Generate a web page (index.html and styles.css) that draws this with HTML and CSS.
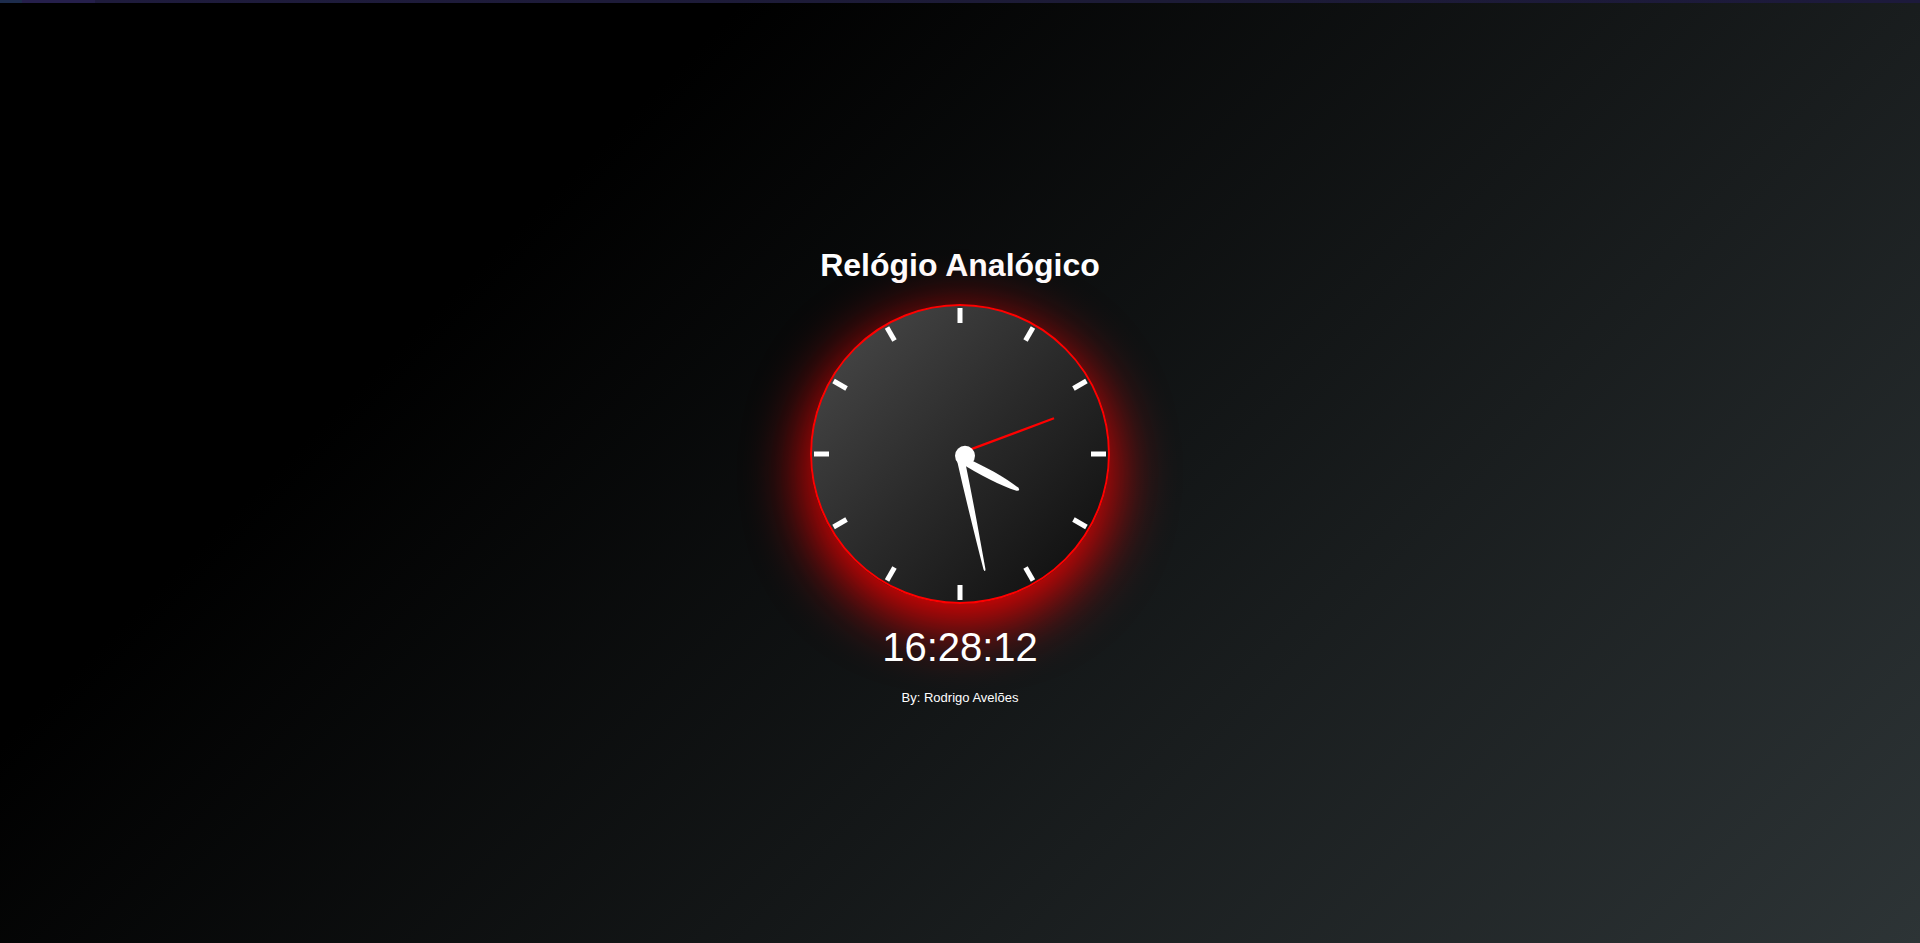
FILE: index.html
```html
<!DOCTYPE html>
<html lang="pt-BR">
<head>
<meta charset="utf-8">
<title>Relógio Analógico</title>
<link rel="stylesheet" href="styles.css">
</head>
<body>
<div class="topbar"></div>
<main class="page">
  <h1 class="title">Relógio Analógico</h1>
  <div class="clock">
    <svg class="face" width="296" height="296" viewBox="-148 -148 296 296">
      <g class="ticks" fill="#fff">
        <rect x="-2.5" y="-146" width="5" height="15" transform="rotate(0)"/>
        <rect x="-2.5" y="-146" width="5" height="15" transform="rotate(30)"/>
        <rect x="-2.5" y="-146" width="5" height="15" transform="rotate(60)"/>
        <rect x="-2.5" y="-146" width="5" height="15" transform="rotate(90)"/>
        <rect x="-2.5" y="-146" width="5" height="15" transform="rotate(120)"/>
        <rect x="-2.5" y="-146" width="5" height="15" transform="rotate(150)"/>
        <rect x="-2.5" y="-146" width="5" height="15" transform="rotate(180)"/>
        <rect x="-2.5" y="-146" width="5" height="15" transform="rotate(210)"/>
        <rect x="-2.5" y="-146" width="5" height="15" transform="rotate(240)"/>
        <rect x="-2.5" y="-146" width="5" height="15" transform="rotate(270)"/>
        <rect x="-2.5" y="-146" width="5" height="15" transform="rotate(300)"/>
        <rect x="-2.5" y="-146" width="5" height="15" transform="rotate(330)"/>
      </g>
      <line x1="0" y1="-0.6" x2="94" y2="-35.7" stroke="#ff0000" stroke-width="2.2" stroke-linecap="butt"/>
      <path fill="#fff" transform="translate(2.6 6.1) rotate(118)" d="M -3.6 0 C -5 -22, -4.8 -46, -1.8 -62 Q 0 -66 1.8 -62 C 4.8 -46, 5 -22, 3.6 0 Z"/>
      <path fill="#fff" transform="translate(0.2 3) rotate(167.8)" d="M -3.9 0 C -3.6 -40, -2.2 -80, -1 -115 Q 0 -118.5 1 -115 C 2.2 -80, 3.6 -40, 3.9 0 Z"/>
      <circle cx="5" cy="1.7" r="10" fill="#fff"/>
    </svg>
  </div>
  <div class="time">16:28:12</div>
  <p class="author">By: Rodrigo Avelões</p>
</main>
</body>
</html>
```

FILE: styles.css
```css
html, body {
  margin: 0;
  padding: 0;
  height: 100%;
}

body {
  background-color: #000;
  background-image: linear-gradient(315deg, #2d3436 0%, #000000 74%);
  font-family: "Liberation Sans", Arial, sans-serif;
  color: #fff;
  overflow: hidden;
  display: flex;
  flex-direction: column;
}

.topbar {
  height: 3px;
  flex: none;
  background: linear-gradient(90deg,
    #1d2c4c 0, #1d2c4c 22px,
    #251f4b 22px, #251f4b 95px,
    #1e1b3c 95px, #1c1b36 60%, #1d1a3c 100%);
}

.page {
  display: flex;
  flex-direction: column;
  align-items: center;
  padding-top: 244px;
}

.title {
  margin: 0 0 20px;
  font-size: 32px;
  line-height: 37px;
  font-weight: bold;
}

.clock {
  width: 300px;
  height: 300px;
  box-sizing: border-box;
  border: 2px solid #ff0000;
  border-radius: 50%;
  background: linear-gradient(135deg, #4b4b4b 0%, #2a2a2a 50%, #0b0b0b 100%);
  box-shadow: 0 18px 60px 3px rgba(255, 0, 0, 0.95);
}

.face {
  display: block;
}

.time {
  margin-top: 20px;
  font-size: 40px;
  line-height: 46px;
}

.author {
  margin: 20px 0 0;
  font-size: 13px;
  line-height: 15px;
}
```
